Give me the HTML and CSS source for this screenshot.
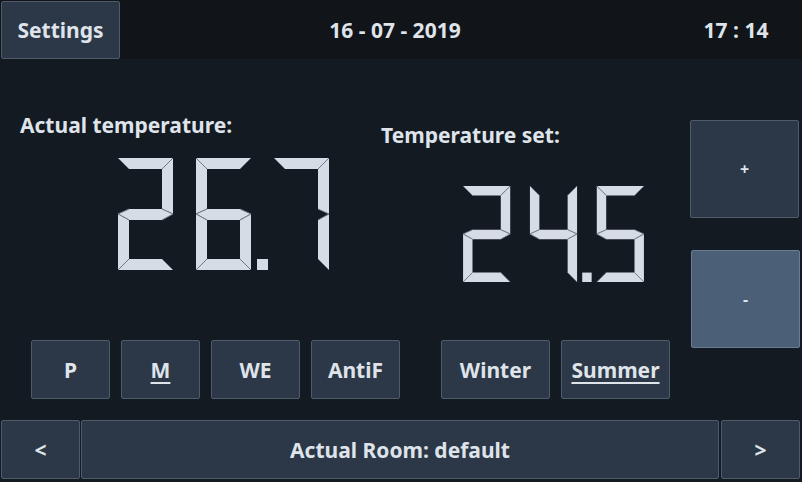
FILE: index.html
```html
<!DOCTYPE html>
<html>
<head>
<meta charset="utf-8">
<link rel="stylesheet" href="styles.css">
</head>
<body>
<svg class="defs" width="0" height="0" aria-hidden="true">
  <defs>
    <g id="sA"><polygon class="seg" points="0,0 55,0 44,11 11,11"/><path class="edge" d="M0,0 L11,11 M55,0 L44,11"/></g>
    <g id="sB"><polygon class="seg" points="55,0 55,56 44,51 44,11"/><path class="edge" d="M55,0 L44,11 M55,56 L44,51"/></g>
    <g id="sC"><polygon class="seg" points="55,56 55,112 44,101 44,62"/><path class="edge" d="M55,56 L44,62 M55,112 L44,101"/></g>
    <g id="sD"><polygon class="seg" points="0,112 11,101 44,101 55,112"/><path class="edge" d="M0,112 L11,101 M55,112 L44,101"/></g>
    <g id="sE"><polygon class="seg" points="0,56 11,62 11,101 0,112"/><path class="edge" d="M0,56 L11,62 M0,112 L11,101"/></g>
    <g id="sF"><polygon class="seg" points="0,0 11,11 11,51 0,56"/><path class="edge" d="M0,0 L11,11 M0,56 L11,51"/></g>
    <g id="sG"><polygon class="seg" points="0,56 11,51 44,51 55,56 44,62 11,62"/><path class="edge" d="M0,56 L11,51 M0,56 L11,62 M55,56 L44,51 M55,56 L44,62"/></g>
  </defs>
</svg>

<header class="header">
  <div class="btn btn-settings">Settings</div>
  <div class="date">16 - 07 - 2019</div>
  <div class="time">17 : 14</div>
</header>

<main class="main">
  <section class="panel">
    <div class="readings">
      <div class="reading reading-actual">
        <div class="label">Actual temperature:</div>
        <svg class="digits digits-big" viewBox="0 0 211 112" width="211" height="112">
          <g transform="translate(0,0)"><use href="#sA"/><use href="#sB"/><use href="#sG"/><use href="#sE"/><use href="#sD"/></g>
          <g transform="translate(78,0)"><use href="#sA"/><use href="#sF"/><use href="#sG"/><use href="#sE"/><use href="#sD"/><use href="#sC"/></g>
          <rect class="seg" x="139" y="101" width="11" height="11"/>
          <g transform="translate(156,0)"><use href="#sA"/><use href="#sB"/><use href="#sC"/></g>
        </svg>
      </div>
      <div class="reading reading-set">
        <div class="label">Temperature set:</div>
        <svg class="digits digits-small" viewBox="0 0 211 112" width="181" height="96">
          <g transform="translate(0,0)"><use href="#sA"/><use href="#sB"/><use href="#sG"/><use href="#sE"/><use href="#sD"/></g>
          <g transform="translate(78,0)"><use href="#sF"/><use href="#sB"/><use href="#sG"/><use href="#sC"/></g>
          <rect class="seg" x="139" y="101" width="11" height="11"/>
          <g transform="translate(156,0)"><use href="#sA"/><use href="#sF"/><use href="#sG"/><use href="#sC"/><use href="#sD"/></g>
        </svg>
      </div>
    </div>
    <div class="modes">
      <div class="btn mode mode-s">P</div>
      <div class="btn mode mode-s"><span class="ul">M</span></div>
      <div class="btn mode mode-m">WE</div>
      <div class="btn mode mode-m">AntiF</div>
      <div class="btn mode mode-l season-first">Winter</div>
      <div class="btn mode mode-l"><span class="ul">Summer</span></div>
    </div>
  </section>
  <aside class="adjust">
    <div class="btn adj">+</div>
    <div class="btn adj adj-active">-</div>
  </aside>
</main>

<footer class="footer">
  <div class="btn nav">&lt;</div>
  <div class="btn room">Actual Room: default</div>
  <div class="btn nav nav-next">&gt;</div>
</footer>
</body>
</html>
```

FILE: styles.css
```css
* { box-sizing: border-box; }

html, body {
  margin: 0;
  padding: 0;
}

body {
  width: 802px;
  height: 482px;
  overflow: hidden;
  background: #141a22;
  color: #dfe3ea;
  font-family: "Noto Sans", "Open Sans", sans-serif;
  font-weight: 700;
  font-size: 21px;
}

.defs {
  position: absolute;
  width: 0;
  height: 0;
}

.seg {
  fill: #d5dce5;
}

.edge {
  fill: none;
  stroke: #6f7884;
  stroke-width: 1;
}

.btn {
  display: flex;
  align-items: center;
  justify-content: center;
  background: #2c3847;
  border: 1px solid #4f5b6a;
  border-radius: 2px;
  color: #dfe3ea;
}

.header {
  display: grid;
  grid-template-columns: 120px 1fr 132px;
  align-items: center;
  height: 59px;
  background: #111519;
}

.btn-settings {
  margin: 1px 0 0 1px;
  width: 119px;
  height: 58px;
  align-self: start;
}

.date, .time {
  text-align: center;
}

.main {
  display: flex;
  height: 361px;
}

.panel {
  width: 690px;
  flex: none;
  display: flex;
  flex-direction: column;
}

.readings {
  display: flex;
  height: 281px;
}

.reading {
  display: flex;
  flex-direction: column;
  align-items: flex-start;
}

.label {
  line-height: 24px;
}

.reading-actual {
  width: 381px;
  padding: 54px 0 0 20px;
}

.digits-big {
  margin: 21px 0 0 98px;
}

.reading-set {
  flex: 1;
  padding-top: 64px;
}

.digits-small {
  margin: 39px 0 0 82px;
}

.modes {
  display: flex;
  gap: 11px;
  padding-left: 31px;
  height: 59px;
}

.mode {
  height: 59px;
}

.mode-s { width: 79px; }
.mode-m { width: 89px; }
.mode-l { width: 109px; }

.season-first {
  margin-left: 30px;
}

.ul {
  text-decoration: underline;
  text-decoration-thickness: 2px;
  text-underline-offset: 4px;
}

.adjust {
  display: flex;
  flex-direction: column;
  gap: 32px;
  padding-top: 61px;
}

.adj {
  width: 109px;
  height: 98px;
  font-size: 16px;
}

.adj-active {
  margin-left: 1px;
  background: #4b5f77;
  border-color: #6c7c90;
}

.footer {
  display: flex;
  gap: 1px;
  padding-left: 1px;
  height: 59px;
}

.nav {
  width: 79px;
  height: 59px;
}

.nav-next {
  margin-left: 1px;
}

.room {
  width: 638px;
  height: 59px;
}
```
